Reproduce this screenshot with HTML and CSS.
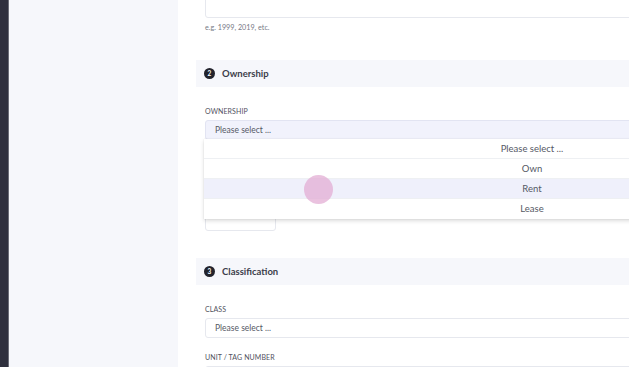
FILE: index.html
```html
<!DOCTYPE html>
<html>
<head>
<meta charset="utf-8">
<link rel="stylesheet" href="styles.css">
</head>
<body>
<div class="app">
  <div class="rail"></div>
  <div class="sidebar"></div>
  <main class="main">
    <div class="field top">
      <div class="input"></div>
      <div class="hint">e.g. 1999, 2019, etc.</div>
    </div>

    <section class="section">
      <div class="section-head"><span class="num">2</span><span class="title">Ownership</span></div>
      <div class="section-body">
        <div class="field">
          <div class="label">OWNERSHIP</div>
          <div class="select-wrap">
            <div class="input select focus">Please select ...</div>
            <ul class="dropdown">
              <li>Please select ...</li>
              <li>Own</li>
              <li class="hover">Rent</li>
              <li>Lease</li>
            </ul>
          </div>
        </div>
        <div class="field small">
          <div class="label">SINCE</div>
          <div class="input short"></div>
        </div>
      </div>
    </section>

    <section class="section">
      <div class="section-head"><span class="num">3</span><span class="title">Classification</span></div>
      <div class="section-body">
        <div class="field">
          <div class="label">CLASS</div>
          <div class="input select">Please select ...</div>
        </div>
        <div class="field">
          <div class="label">UNIT / TAG NUMBER</div>
          <div class="input"></div>
        </div>
      </div>
    </section>
  </main>
  <div class="cursor"></div>
</div>
</body>
</html>
```

FILE: styles.css
```css
* { box-sizing: border-box; }
html, body { margin: 0; padding: 0; }
body {
  width: 629px;
  height: 367px;
  overflow: hidden;
  background: #ffffff;
  font-family: Lato, "Open Sans", sans-serif;
  color: #4a4c58;
}
.app {
  position: relative;
  display: flex;
  height: 367px;
  overflow: hidden;
}
.rail {
  width: 9px;
  flex: none;
  background: #2f303e;
  border-right: 1px solid #6b6d78;
}
.sidebar {
  width: 169px;
  flex: none;
  background: #f6f7fb;
}
.main {
  flex: none;
  width: 720px;
  padding-left: 18px;
  margin-top: -13px;
}
.field { padding-left: 9px; }
.input {
  height: 20px;
  border: 1px solid #e6e8ee;
  border-radius: 3px;
  background: #fff;
  font-size: 8.5px;
  line-height: 18px;
  padding-left: 9px;
  color: #555865;
}
.top .input { height: 31px; }
.hint {
  font-size: 7.2px;
  color: #777a86;
  margin-top: 5px;
  line-height: 9px;
}
.section { margin-top: 28px; }
.section + .section { margin-top: 27px; }
.section-head {
  height: 27px;
  background: #f6f7fb;
  display: flex;
  align-items: center;
  padding-left: 8px;
  gap: 7px;
}
.num {
  width: 11px;
  height: 11px;
  border-radius: 50%;
  background: #22232c;
  color: #fff;
  font-size: 6.5px;
  font-weight: 700;
  display: flex;
  align-items: center;
  justify-content: center;
}
.title {
  font-size: 9.5px;
  font-weight: 700;
  color: #3b3d4a;
}
.section-body { padding-top: 18px; }
.label {
  font-size: 7px;
  color: #50525e;
  line-height: 9px;
  padding-top: 2px;
  margin-bottom: 4px;
  letter-spacing: 0.1px;
}
.field + .field { margin-top: 13px; }
.field.small { margin-top: 56px; }
.select.focus {
  background: #f1f2fc;
  border-color: #e2e4f2;
}
.select-wrap { position: relative; }
.dropdown {
  position: absolute;
  left: -1px;
  top: 19px;
  width: 656px;
  margin: 0;
  padding: 0;
  list-style: none;
  background: #fff;
  box-shadow: 0 2px 4px rgba(0, 0, 0, 0.14), 0 0 1px rgba(0, 0, 0, 0.12);
  z-index: 2;
}
.dropdown li {
  height: 20px;
  line-height: 20px;
  text-align: center;
  font-size: 9.5px;
  color: #555865;
  border-bottom: 1px solid #eef0f3;
}
.dropdown li:last-child { border-bottom: none; }
.dropdown li.hover { background: #eff0fb; }
.small .label { visibility: hidden; }
.input.short { width: 71px; }
.cursor {
  position: absolute;
  left: 304px;
  top: 175px;
  width: 29px;
  height: 29px;
  border-radius: 50%;
  background: rgba(226, 170, 210, 0.72);
  z-index: 3;
}
```
